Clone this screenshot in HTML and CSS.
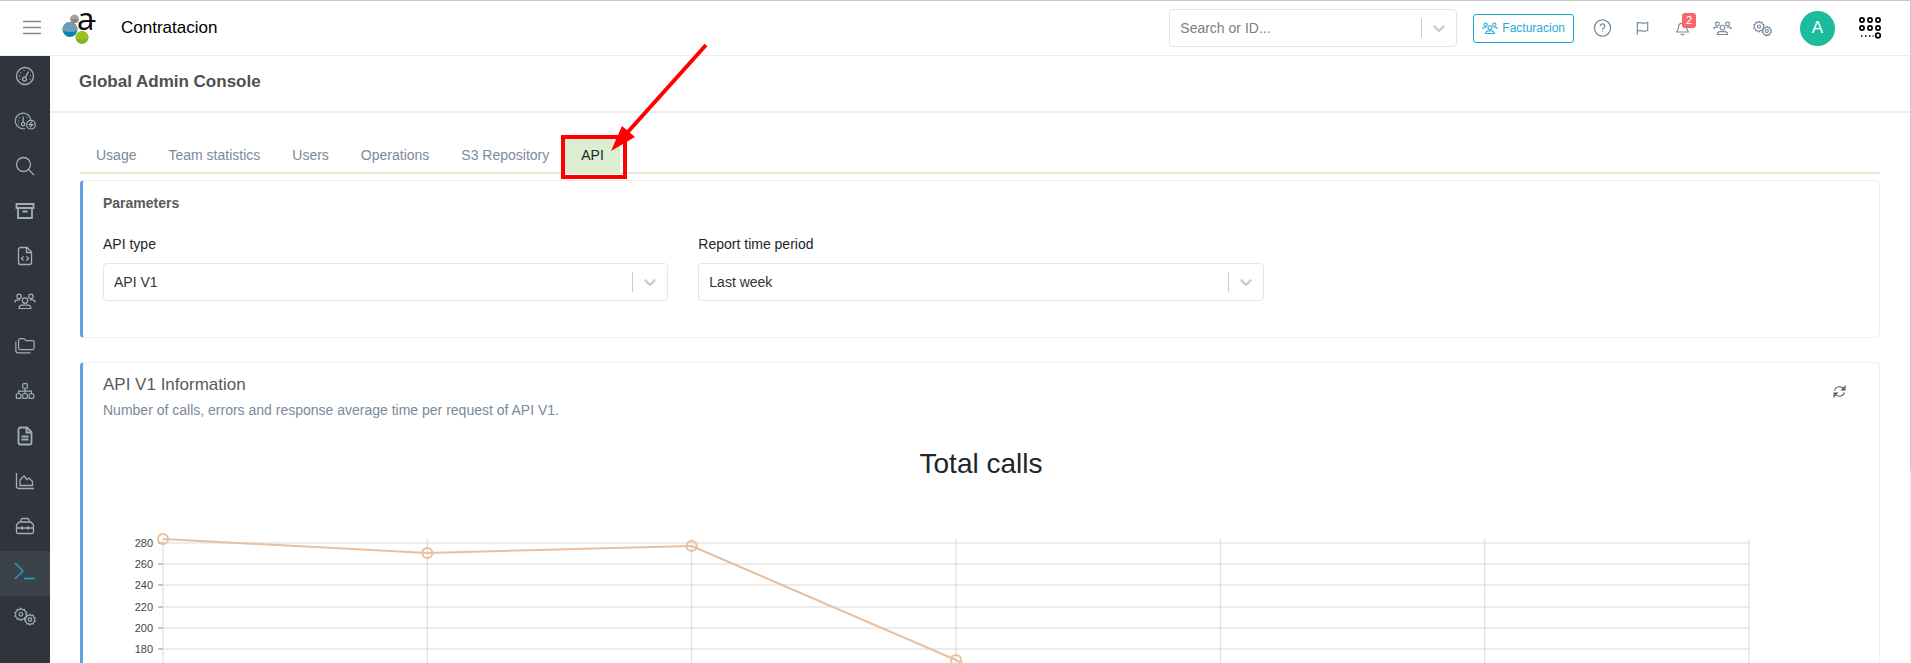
FILE: index.html
```
<!DOCTYPE html>
<html lang="en">
<head>
    <meta charset="UTF-8">
    <meta name="viewport" content="width=device-width, initial-scale=1.0">
    <title>Global Admin Console</title>
    <link rel="stylesheet" href="styles.css">
</head>
<body>
    <!-- icon set -->
    <svg class="sprite" aria-hidden="true">
        <symbol id="i-gauge" viewBox="0 0 20 20">
            <circle cx="10" cy="10" r="8.5"/><circle cx="9.5" cy="13" r="1.9"/>
            <path d="M10.3 11.3L13.6 5.6M4.2 10h1M5.5 6.2l.8.6M9 4.2v1M15 9.8h1M14.6 13.4h.8M4.8 13.4h.8"/>
        </symbol>
        <symbol id="i-gauge-bolt" viewBox="0 0 24 20">
            <path d="M12 18.200A8.5 8.5 0 1 1 18.3 8.6"/><circle cx="10" cy="13.4" r="1.9"/>
            <path d="M10 11.5V5M4.3 10h1M5.6 6.2l.8.6M14 6.2l.6-.5M4.8 13.4h.8"/>
            <circle cx="18.5" cy="14" r="4.7"/><path d="M19.500 11l-2.800 3h3.600L17.500 17"/>
        </symbol>
        <symbol id="i-search" viewBox="0 0 20 20"><circle cx="8.5" cy="8.5" r="7"/><path d="M13.6 13.6L19 19"/></symbol>
        <symbol id="i-archive" viewBox="0 0 20 20">
            <path d="M1.5 3h17v4h-17zM3 7v10h14V7M7.5 10.5h5"/>
        </symbol>
        <symbol id="i-file-code" viewBox="0 0 20 20">
            <path d="M12 1.5H5.5a2 2 0 0 0-2 2v13a2 2 0 0 0 2 2h9a2 2 0 0 0 2-2V6zM11.5 1.5V6.5h5M8.5 10.5l-2 2 2 2M11.5 10.5l2 2-2 2"/>
        </symbol>
        <symbol id="i-users" viewBox="0 0 24 20">
            <circle cx="5.5" cy="5" r="2.4"/><circle cx="18.5" cy="5" r="2.4"/><circle cx="12" cy="9.5" r="3"/>
            <path d="M1 11.5c0-1.6 1.2-2.7 3-2.7h2.4M23 11.5c0-1.6-1.2-2.7-3-2.7h-2.4M5.5 18.2c0-2.4 1.8-3.7 3.7-3.7h5.6c1.9 0 3.7 1.3 3.7 3.7z"/>
        </symbol>
        <symbol id="i-folders" viewBox="0 0 24 20">
            <path d="M5 4a2 2 0 0 1 2-2h3.8l2.4 2.2H20a2 2 0 0 1 2 2V12a2 2 0 0 1-2 2H7a2 2 0 0 1-2-2zM2 5v9.5A3 3 0 0 0 5 17.5h13"/>
        </symbol>
        <symbol id="i-sitemap" viewBox="0 0 24 20">
            <rect x="9.5" y="2" width="5" height="5" rx="1"/><rect x="2.5" y="13" width="5" height="5" rx="1"/>
            <rect x="9.5" y="13" width="5" height="5" rx="1"/><rect x="16.5" y="13" width="5" height="5" rx="1"/>
            <path d="M12 7v6M5 13v-2.8h14V13"/>
        </symbol>
        <symbol id="i-file" viewBox="0 0 20 20">
            <path d="M12 1.5H5.5a2 2 0 0 0-2 2v13a2 2 0 0 0 2 2h9a2 2 0 0 0 2-2V6zM11.5 1.5V6.5h5M6.5 10.5h7M6.5 13.5h7"/>
        </symbol>
        <symbol id="i-chart" viewBox="0 0 20 20">
            <path d="M1.5 2v13a2.5 2.5 0 0 0 2.5 2.5H19M5 14.5V9l4-4 3 3.5 2-1.5 3.5 3.5v4z"/>
        </symbol>
        <symbol id="i-toolbox" viewBox="0 0 20 20">
            <path d="M6 6V4a1.5 1.5 0 0 1 1.5-1.5h5A1.5 1.5 0 0 1 14 4v2M4 6h12l2.5 3v7a1.5 1.5 0 0 1-1.5 1.5H3A1.5 1.5 0 0 1 1.5 16V9zM1.500 12h17M7 10v4M13 10v4"/>
        </symbol>
        <symbol id="i-terminal" viewBox="0 0 20 20"><path d="M0 2l8 8-8 8M9 17.5h11"/></symbol>
        <symbol id="i-cogs" viewBox="0 0 24 20">
            <path d="M7.5 1.5l1.6 1.7 2.3-.4.6 2.2 2 1.2-1 2 1 2-2 1.2-.6 2.2-2.3-.4-1.6 1.7-1.6-1.7-2.3.4L3 11.4l-2-1.2 1-2-1-2L3 5l.6-2.2 2.3.4z"/>
            <circle cx="7.5" cy="8.2" r="2"/>
            <path d="M17.5 8l1.400 1.500 2-.3.5 1.900 1.700 1.100-.8 1.700.8 1.700-1.700 1.100-.5 1.900-2-.3-1.400 1.500-1.400-1.500-2 .3-.5-1.900-1.700-1.100.8-1.700-.8-1.700 1.700-1.100.5-1.900 2 .3z"/>
            <circle cx="17.5" cy="13.9" r="1.900"/>
        </symbol>
        <symbol id="i-help" viewBox="0 0 20 20">
            <circle cx="10" cy="10" r="9"/><path d="M7.5 8a2.5 2.5 0 1 1 3.8 2.1c-.9.5-1.3 1-1.3 1.9M10 13.5v1.2"/>
        </symbol>
        <symbol id="i-flag" viewBox="0 0 20 20"><path d="M3.5 2.5v16M3.5 4c4-2.5 6.5 1.600 13-.8v10c-6.500 2.400-9-1.700-13 .8"/></symbol>
        <symbol id="i-bell" viewBox="0 0 20 20">
            <path d="M10 2.5v1.3M10 3.800c-3 0-5 2.200-5 5 0 4-2.300 4.700-2.300 6.200h14.600c0-1.500-2.300-2.200-2.300-6.200 0-2.800-2-5-5-5zM8 17.200c.6 1.700 3.400 1.700 4 0"/>
        </symbol>
        <symbol id="i-refresh" viewBox="0 0 20 20">
            <path d="M2.5 8.5C4.5 1.5 13 .8 17.5 7M18.500 2v5.500h-5zM17.500 11.500C15.500 18.500 7 19.200 2.500 13M1.500 18v-5.500h5z"/>
        </symbol>
        <symbol id="i-down" viewBox="0 0 20 20">
            <path d="M4.516 7.548c.436-.446 1.043-.481 1.576 0L10 11.295l3.908-3.747c.533-.481 1.141-.446 1.574 0 .436.445.408 1.197 0 1.615-.406.418-4.695 4.502-4.695 4.502a1.095 1.095 0 0 1-1.576 0S4.924 9.581 4.516 9.163s-.436-1.170 0-1.615z"/>
        </symbol>
    </svg>

    <header class="topbar">
        <button class="menu_btn" aria-label="Menu">
            <svg class="menu_icon" viewBox="0 0 18 16"><path d="M0 1.500h18M0 7.500h18M0 13.500h18"/></svg>
        </button>
        <a href="#" class="logo" aria-label="Home">
            <svg viewBox="0 0 34 34">
                <circle cx="12.5" cy="8" r="4.3" fill="#8f8683"/>
                <path d="M8.2 8a4.3 4.3 0 0 1 8.6 0z" fill="#aaa09d"/>
                <circle cx="8" cy="18.5" r="7.5" fill="#0b84b0"/>
                <path d="M.6 19.5a7.5 7.5 0 1 1 14.8 0q-7.4 3-14.8 0z" fill="#6d9fba"/>
                <circle cx="20" cy="26.500" r="6.5" fill="#7fb52b"/>
                <path d="M13.5 27a6.5 6.5 0 0 1 13 0q-6.500 2.500-13 0z" fill="#9cc31e"/>
                <path d="M28 10h5.500" stroke="#111" stroke-width="2"/>
                <text x="15" y="19" class="logo_letter">a</text>
            </svg>
        </a>
        <span class="brand">Contratacion</span>
        <div class="search">
            <input type="text" class="search_input" placeholder="Search or ID..." aria-label="Search or ID">
            <span class="arrow"><svg><use href="#i-down"/></svg></span>
        </div>
        <button class="team_btn"><svg class="icon"><use href="#i-users"/></svg>Facturacion</button>
        <nav class="tools">
            <a href="#" aria-label="Help"><svg class="icon"><use href="#i-help"/></svg></a>
            <a href="#" aria-label="Flag"><svg class="icon icon_s"><use href="#i-flag"/></svg></a>
            <a href="#" aria-label="Notifications"><svg class="icon icon_s"><use href="#i-bell"/></svg><span class="badge">2</span></a>
            <a href="#" aria-label="Teams"><svg class="icon"><use href="#i-users"/></svg></a>
            <a href="#" aria-label="Settings"><svg class="icon"><use href="#i-cogs"/></svg></a>
        </nav>
        <button class="avatar">A</button>
        <button class="apps" aria-label="Apps">
            <svg viewBox="0 0 22 22">
                <g fill="none" stroke="#000" stroke-width="1.7">
                    <circle cx="3" cy="3" r="2.1"/><circle cx="11" cy="3" r="2.1"/><circle cx="19" cy="3" r="2.1"/>
                    <circle cx="3" cy="11" r="2.1"/><circle cx="11" cy="11" r="2.1"/><circle cx="19" cy="11" r="2.1"/>
                    <circle cx="19" cy="18.5" r="2.3"/>
                </g>
                <path d="M2 19h1.500M6 19h1.500M10 19h1.500M13.500 19h1" stroke="#000" stroke-width="1.5"/>
            </svg>
        </button>
    </header>

    <div class="layout">
        <nav class="sidebar">
            <a href="#" aria-label="Dashboard"><svg class="icon"><use href="#i-gauge"/></svg></a>
            <a href="#" aria-label="Activity"><svg class="icon"><use href="#i-gauge-bolt"/></svg></a>
            <a href="#" aria-label="Search"><svg class="icon"><use href="#i-search"/></svg></a>
            <a href="#" aria-label="Archive"><svg class="icon bold"><use href="#i-archive"/></svg></a>
            <a href="#" aria-label="Templates"><svg class="icon"><use href="#i-file-code"/></svg></a>
            <a href="#" aria-label="Teams"><svg class="icon"><use href="#i-users"/></svg></a>
            <a href="#" aria-label="Folders"><svg class="icon"><use href="#i-folders"/></svg></a>
            <a href="#" aria-label="Organization"><svg class="icon"><use href="#i-sitemap"/></svg></a>
            <a href="#" aria-label="Documents"><svg class="icon bold"><use href="#i-file"/></svg></a>
            <a href="#" aria-label="Reports"><svg class="icon"><use href="#i-chart"/></svg></a>
            <a href="#" aria-label="Tools"><svg class="icon"><use href="#i-toolbox"/></svg></a>
            <a href="#" aria-label="Console" class="on"><svg class="icon"><use href="#i-terminal"/></svg></a>
            <a href="#" aria-label="Settings"><svg class="icon"><use href="#i-cogs"/></svg></a>
        </nav>

        <main class="main">
            <h1 class="page_title">Global Admin Console</h1>
            <div class="content">
                <ul class="tabs">
                    <li><a href="#">Usage</a></li>
                    <li><a href="#">Team statistics</a></li>
                    <li><a href="#">Users</a></li>
                    <li><a href="#">Operations</a></li>
                    <li><a href="#">S3 Repository</a></li>
                    <li><a href="#" class="on">API</a></li>
                </ul>

                <section class="card params">
                    <h2 class="params_title">Parameters</h2>
                    <div class="fields">
                        <div class="field">
                            <label for="api_type">API type</label>
                            <div class="select_box">
                                <select id="api_type"><option>API V1</option></select>
                                <span class="arrow"><svg><use href="#i-down"/></svg></span>
                            </div>
                        </div>
                        <div class="field">
                            <label for="period">Report time period</label>
                            <div class="select_box">
                                <select id="period"><option>Last week</option></select>
                                <span class="arrow"><svg><use href="#i-down"/></svg></span>
                            </div>
                        </div>
                    </div>
                </section>

                <section class="card">
                    <div class="card_head">
                        <div>
                            <h2 class="card_title">API V1 Information</h2>
                            <p class="card_desc">Number of calls, errors and response average time per request of API V1.</p>
                        </div>
                        <button class="refresh" aria-label="Refresh"><svg class="icon"><use href="#i-refresh"/></svg></button>
                    </div>
                    <h3 class="chart_title">Total calls</h3>
                    <div class="chart">
                        <svg class="axis">
                            <path d="M55 4h5M55 25h5M55 46h5M55 68h5M55 89h5M55 110h5"/>
                            <text x="50" y="8">280</text>
                            <text x="50" y="29">260</text>
                            <text x="50" y="50">240</text>
                            <text x="50" y="72">220</text>
                            <text x="50" y="93">200</text>
                            <text x="50" y="114">180</text>
                        </svg>
                        <svg class="plot">
                            <g class="grid">
                                <line x1="0" x2="100%" y1="4" y2="4"/>
                                <line x1="0" x2="100%" y1="25" y2="25"/>
                                <line x1="0" x2="100%" y1="46" y2="46"/>
                                <line x1="0" x2="100%" y1="68" y2="68"/>
                                <line x1="0" x2="100%" y1="89" y2="89"/>
                                <line x1="0" x2="100%" y1="110" y2="110"/>
                                <line x1="0" x2="0" y1="0" y2="300"/>
                                <line x1="16.667%" x2="16.667%" y1="0" y2="300"/>
                                <line x1="33.333%" x2="33.333%" y1="0" y2="300"/>
                                <line x1="50%" x2="50%" y1="0" y2="300"/>
                                <line x1="66.667%" x2="66.667%" y1="0" y2="300"/>
                                <line x1="83.333%" x2="83.333%" y1="0" y2="300"/>
                                <line x1="100%" x2="100%" y1="0" y2="300"/>
                            </g>
                            <g class="series">
                                <line x1="0" y1="0" x2="16.667%" y2="14"/>
                                <line x1="16.667%" y1="14" x2="33.333%" y2="7"/>
                                <line x1="33.333%" y1="7" x2="50%" y2="121"/>
                                <line x1="50%" y1="121" x2="66.667%" y2="260"/>
                                <circle cx="0" cy="0" r="5"/>
                                <circle cx="16.667%" cy="14" r="5"/>
                                <circle cx="33.333%" cy="7" r="5"/>
                                <circle cx="50%" cy="121" r="5"/>
                            </g>
                        </svg>
                    </div>
                </section>
            </div>
        </main>
    </div>

    <!-- marker over the API tab -->
    <svg class="marker" viewBox="0 0 150 140" aria-hidden="true">
        <rect x="3" y="97" width="62" height="40"/>
        <path d="M146 5L66 94"/>
        <path class="tip" d="M51 111L62 86L75 97z"/>
    </svg>
    <div class="scroll_line"></div>
</body>
</html>
```

FILE: styles.css
```
*{
    margin: 0;
    padding: 0;
    box-sizing: border-box;
}
body{
    display: flex;
    flex-direction: column;
    height: 100vh;
    position: relative;
    overflow: hidden;
    background: #fff;
    color: #212529;
    font-family: "Liberation Sans", Arial, sans-serif;
    font-size: 14px;
    line-height: 20px;
}
a{
    color: inherit;
    text-decoration: none;
}
ul{
    list-style: none;
}
button{
    border: 0;
    background: none;
    font: inherit;
    cursor: pointer;
}
svg{
    display: block;
}
.sprite{
    position: absolute;
    width: 0;
    height: 0;
}
.icon{
    width: 22px;
    height: 18px;
    fill: none;
    stroke: currentColor;
    stroke-width: 1.3;
}
.icon_s{
    width: 18px;
}
.bold{
    stroke-width: 1.8;
}

/* topbar */
.topbar{
    display: flex;
    align-items: center;
    height: 56px;
    padding: 0 30px 0 23px;
    border-top: 1px solid #c8c8c8;
    border-bottom: 1px solid #ececec;
}
.menu_icon{
    width: 18px;
    height: 16px;
    stroke: #7a8b9c;
    stroke-width: 1.6;
}
.logo{
    margin-left: 21px;
}
.logo svg{
    width: 34px;
    height: 34px;
    overflow: visible;
}
.logo_letter{
    font-family: "Noto Sans", sans-serif;
    font-size: 31px;
    fill: #111;
}
.brand{
    margin-left: 25px;
    font-size: 17px;
    color: #000;
}
.search,
.select_box{
    display: grid;
    grid-template-columns: 1fr 35px;
    height: 38px;
    border: 1px solid #e3e6ea;
    border-radius: 4px;
}
.search{
    width: 288px;
    margin-left: auto;
}
.search_input{
    min-width: 0;
    padding-left: 10px;
    border: 0;
    outline: 0;
    background: none;
    font: inherit;
}
.search_input::placeholder{
    color: #808080;
}
.arrow{
    grid-area: 1 / 2;
    display: flex;
    align-items: center;
    justify-content: center;
    height: 20px;
    margin-top: 8px;
    border-left: 1px solid #ccc;
    pointer-events: none;
}
.arrow svg{
    width: 20px;
    height: 20px;
    fill: #ccc;
}
.team_btn{
    display: flex;
    align-items: center;
    gap: 4px;
    height: 29px;
    margin: 0 8px 0 16px;
    padding: 0 8px;
    border: 1px solid #1fa5d6;
    border-radius: 3px;
    color: #2ba9d8;
    font-size: 12px;
}
.team_btn .icon{
    width: 16px;
    height: 14px;
    stroke-width: 1.6;
}
.tools{
    display: flex;
    color: #7a8b9c;
}
.tools a{
    display: flex;
    justify-content: center;
    align-items: center;
    position: relative;
    width: 40px;
    height: 40px;
}
.tools .icon{
    width: 19px;
    stroke-width: 1.5;
}
.tools .icon_s{
    height: 16px;
}
.badge{
    position: absolute;
    top: 5px;
    left: 20px;
    width: 14px;
    border-radius: 3px;
    background: #f96868;
    color: #fff;
    font-size: 11px;
    line-height: 15px;
    text-align: center;
}
.avatar{
    width: 35px;
    height: 35px;
    margin: 0 24px 0 18px;
    border-radius: 50%;
    background: #1abc9c;
    color: #fff;
    font-size: 17px;
}
.apps svg{
    width: 22px;
    height: 22px;
}

/* sidebar */
.layout{
    display: flex;
    flex: 1;
    min-height: 0;
}
.sidebar{
    flex: none;
    width: 50px;
    overflow: hidden;
    background: #30353c;
    color: #a3aebb;
}
.sidebar a{
    display: flex;
    justify-content: center;
    align-items: center;
    height: 45px;
    padding-bottom: 5px;
}
.sidebar .icon{
    height: 20px;
}
.sidebar .on{
    background: #3b4248;
    color: #1fa5dc;
}

/* content */
.main{
    flex: 1;
    min-width: 0;
    overflow-y: auto;
    scrollbar-width: none;
}
.page_title{
    padding: 16px 29px 19px;
    border-bottom: 2px solid #ededed;
    color: #4f4f4f;
    font-size: 17px;
}
.content{
    padding: 24px 31px 0 30px;
}
.tabs{
    display: flex;
    margin-bottom: 6px;
    border-bottom: 2px solid #dbeed2;
    color: #7b8a99;
}
.tabs a{
    display: block;
    padding: 8px 16px 7px;
}
.tabs .on{
    background: #dbeed2;
    color: #212529;
}
.card{
    margin-bottom: 24px;
    padding: 12px 20px;
    border: 1px solid #f0f0f0;
    border-left: 3px solid #5fa2dd;
    border-radius: 4px;
}
.params{
    padding-bottom: 36px;
}
.params_title{
    margin-bottom: 21px;
    color: #5a5a5a;
    font-size: 14px;
}
.fields{
    display: grid;
    grid-template-columns: repeat(3, 1fr);
    gap: 30px;
}
.field label{
    display: block;
    margin-bottom: 9px;
}
.select_box select{
    grid-area: 1 / 1 / 2 / 3;
    padding-left: 10px;
    border: 0;
    background: none;
    color: #333;
    font: inherit;
    appearance: none;
}
.card_head{
    display: flex;
    justify-content: space-between;
}
.card_title{
    margin-bottom: 5px;
    color: #5a5a5a;
    font-size: 17px;
    font-weight: normal;
}
.card_desc{
    color: #7b8a99;
}
.refresh{
    display: flex;
    align-items: center;
    justify-content: center;
    width: 40px;
    height: 32px;
    color: #555;
}
.refresh .icon{
    width: 13px;
    height: 13px;
    stroke-width: 1.6;
}
.chart_title{
    margin-top: 27px;
    font-size: 28px;
    font-weight: normal;
    line-height: 34px;
    text-align: center;
}
.chart{
    display: flex;
    margin-top: 58px;
    padding-right: 110px;
}
.chart svg{
    height: 300px;
    overflow: visible;
}
.axis{
    flex: none;
    width: 60px;
    stroke: #888;
}
.axis text{
    fill: #444;
    stroke: none;
    font-size: 11px;
    text-anchor: end;
}
.plot{
    flex: 1;
    min-width: 0;
}
.grid{
    stroke: #d9d9d9;
}
.series{
    fill: none;
    stroke: #e8bf9f;
    stroke-width: 2;
}

.marker{
    position: absolute;
    top: 40px;
    left: 560px;
    width: 150px;
    height: 140px;
    fill: none;
    stroke: #f00;
    stroke-width: 4;
    pointer-events: none;
}
.marker .tip{
    fill: #f00;
    stroke: none;
}
.scroll_line{
    position: absolute;
    top: 0;
    right: 0;
    width: 1px;
    height: 100%;
    background: linear-gradient(#c8c8c8 71%, #eee 71%);
}
```
